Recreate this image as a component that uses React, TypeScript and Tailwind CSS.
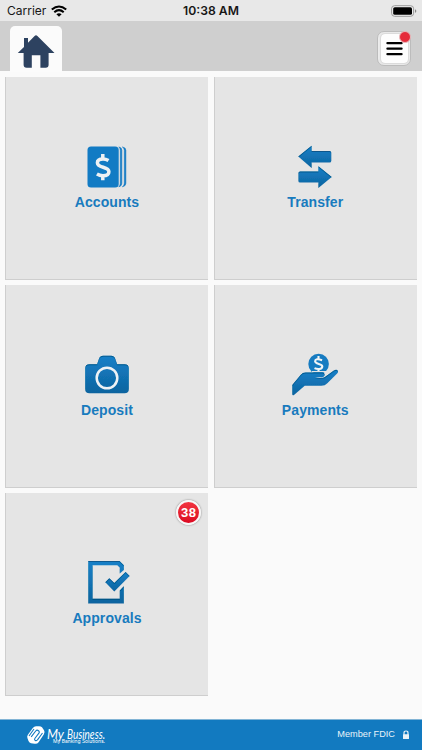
import React from "react";

function BlueDefs() {
  return (
    <svg width="0" height="0" className="absolute" aria-hidden="true">
      <defs>
        <linearGradient id="blue" x1="0" y1="0" x2="0" y2="1">
          <stop offset="0" stopColor="#1680c8" />
          <stop offset="1" stopColor="#0e649f" />
        </linearGradient>
        <filter id="inset" x="-10%" y="-10%" width="120%" height="120%">
          <feOffset in="SourceAlpha" dx="0.3" dy="0.8" result="off" />
          <feGaussianBlur in="off" stdDeviation="0.4" result="blur" />
          <feComposite in="SourceAlpha" in2="blur" operator="out" result="edge" />
          <feFlood floodColor="#0a3c63" floodOpacity="0.65" />
          <feComposite in2="edge" operator="in" result="shade" />
          <feMerge>
            <feMergeNode in="SourceGraphic" />
            <feMergeNode in="shade" />
          </feMerge>
        </filter>
      </defs>
    </svg>
  );
}

function AccountsIcon() {
  return (
    <svg width="60" height="50" viewBox="0.5 0 60 50">
      <rect x="11" y="4.500" width="31.200" height="41" rx="3.500" fill="#127bc4" />
      <path d="M42.300 4.900q3 .5 3 3.400v33q0 2.900-3 3.600q1.500-1.200 1.500-3.600V8.300q0-2.300-1.500-3.400z" fill="#127bc4" stroke="#127bc4" strokeWidth=".6" />
      <path d="M45.800 4.900q3.600.5 3.600 3.400v33q0 2.900-3.600 3.600q2-1.200 2-3.600V8.300q0-2.300-2-3.400z" fill="#127bc4" stroke="#127bc4" strokeWidth=".5" />
      <path d="M26.300 12v4.500M26.300 33.500v4.800M32 18.600q-2.800-1.700-5.500-1.700c-3.700 0-5.600 1.500-5.600 3.800 0 5.700 11.500 3.300 11.500 9 0 2.700-2.500 4-5.900 4q-3.400 0-6.100-1.600" fill="none" stroke="#edf1f4" strokeWidth="3.500" />
    </svg>
  );
}

function TransferIcon() {
  return (
    <svg width="60" height="50" viewBox="0 0 60 50">
      <g fill="url(#blue)" filter="url(#inset)">
        <path d="M13.300 14.400 26.600 3.700v5.300h18q1.600 0 1.600 1.500v8.500q0 1.500-1.600 1.500h-18v5.500z" />
        <path d="M46.700 34.900 33.400 24.200v5.300H15.100q-1.600 0-1.600 1.500v8.100q0 1.500 1.600 1.500h18.300v5.300z" />
      </g>
    </svg>
  );
}

function DepositIcon() {
  return (
    <svg width="60" height="50" viewBox="0 0 60 50">
      <path filter="url(#inset)" fill="url(#blue)" d="M12.500 14.200h7.600l2-5.600q1-2.800 4-2.800h8q3 0 4 2.800l2 5.600h7.400q4.300 0 4.300 4.300v20.500q0 4.300-4.300 4.300h-35q-4.300 0-4.300-4.300V18.500q0-4.300 4.300-4.300z" />
      <circle cx="30" cy="28" r="10.300" fill="none" stroke="#edf2f5" strokeWidth="2.500" />
    </svg>
  );
}

function PaymentsIcon() {
  return (
    <svg width="60" height="50" viewBox="0 0 60 50">
      <circle cx="33.600" cy="14" r="10.300" fill="#167bc1" />
      <path d="M33.500 6v3M33.500 18.500v2.700M37.100 10.200q-6.900-2.300-7 1.100c0 3.200 7.500 2 7.200 5.300-.3 2.800-4.800 2.900-7.800 1.500" fill="none" stroke="#f1f4f6" strokeWidth="2.100" />
      <path d="M27 21.600h14q3 .2 3.700 2" fill="none" stroke="#e5e5e5" strokeWidth="1.300" />
      <path filter="url(#inset)" fill="url(#blue)" d="M7.300 35 15.600 24.900q2-2.300 5-2.300h16.500q2.500 0 2.500 2 0 2.600-3 2.600H30q5 1.600 9.600 0l9.300-6.600q2.300-1.600 3.700-.2 1.200 1.400-.5 3.200L42.300 33.200q-2.300 2.500-5.900 2.500H19.700L9 44.900q-1.500 1-1.700-.7z" />
    </svg>
  );
}

function ApprovalsIcon() {
  return (
    <svg width="60" height="50" viewBox="0 0 60 50">
      <g fill="url(#blue)" filter="url(#inset)">
        <path d="M11.300 3h31.200l4.300 4.300V12l-4 3.600V9.700L40.300 7.300H15.600v33.400h27.200v-8.300l4-4.200v17.300H11.300z" />
        <path d="m28.300 24.300 4-4.100 5 4.900 11.300-11.200 4 4.100L37.300 33.500z" />
      </g>
    </svg>
  );
}

type TileProps = { label: string; icon: React.ReactNode; badge?: number };

function Tile({ label, icon, badge }: TileProps) {
  return (
    <div className="relative flex h-[203px] flex-col items-center border-b border-l border-[#cecece] bg-[#e5e5e5] pt-[65px] even:pr-[1.500px]">
      {icon}
      <span className="mt-[1px] text-[14px] leading-[18px] font-bold tracking-[0.080px] text-[#187bbe]">{label}</span>
      {badge !== undefined && (
        <span className="absolute top-[7px] right-[7px] flex h-[25px] w-[25px] items-center justify-center rounded-full border-2 border-[#f7f7f7] bg-linear-to-b from-[#f2323f] to-[#dc0722] pl-[0.500px] text-[13px] leading-none font-bold tracking-[0.500px] text-white shadow-[0_0_2px_#777]">
          {badge}
        </span>
      )}
    </div>
  );
}

function StatusBar() {
  return (
    <div className="grid h-[21px] grid-cols-3 items-center bg-[#e8e8e8] pt-[1px] font-[Inter,sans-serif] text-[12px] leading-[20px] text-[#171717]">
      <div className="flex items-center gap-[5px] pl-[7px]">
        <span className="w-[39px] text-[12px]">Carrier</span>
        <svg width="16" height="12" viewBox="0 0 16 12">
          <path d="M.8 4.500q7.200-6 14.400 0M3.300 7.200q4.700-4 9.400 0" fill="none" stroke="#000" strokeWidth="2.100" />
          <path d="M5.400 9.200q2.600-2 5.200 0L8 11.800z" fill="#000" />
        </svg>
      </div>
      <div className="text-center text-[12.200px] font-semibold whitespace-nowrap">10:38 AM</div>
      <div className="flex justify-end pr-[5px]">
        <svg width="26" height="12" viewBox="0 0 26 12">
          <rect x=".6" y=".7" width="22" height="10.600" rx="3" fill="#eee" stroke="#999" strokeWidth="1" />
          <rect x="2.200" y="2.200" width="18.800" height="7.600" rx="1.600" fill="#000" />
          <path d="M24 4.200q1.300.4 1.300 1.800T24 7.800z" fill="#888" />
        </svg>
      </div>
    </div>
  );
}

function Header() {
  return (
    <header className="flex h-[50px] justify-between bg-[#cfcfcf] pr-[11px] pl-[10px]">
      <div className="mt-[5px] flex h-[46px] w-[52px] justify-center rounded-t-[5px] bg-[#fbfbfb] pt-[8px] pr-[1px]">
        <svg width="38" height="34" viewBox="0 0 38 34">
          <path d="M7 4h4v4.800L17.600 2q1.400-1.300 2.800 0L37.500 19h-5.900v11.700q0 3-3 3h-5.200V21.300h-8.600v12.400h-5.200q-3 0-3-3V19H.8L7 13z" fill="#2d4260" />
        </svg>
      </div>
      <div className="relative mt-[10px] flex h-[35px] w-[34px] items-center justify-center rounded-[7px] border border-[#bcbcbc] bg-[#ececec]">
        <div className="flex h-[29px] w-[27px] items-center justify-center rounded-[4px] bg-[#fdfdfd] shadow-[0_0_2px_#aaa]">
          <svg width="17" height="15" viewBox="0 0 17 15">
            <path d="M1.500 2.100h14M1.500 7.600h14M1.500 13.100h14" stroke="#000" strokeWidth="2.400" strokeLinecap="round" />
          </svg>
        </div>
        <span className="absolute -top-[1px] -right-[1px] h-[12px] w-[12px] rounded-full border border-[#e9b8bb] bg-[#e52c3b]" />
      </div>
    </header>
  );
}

function Footer() {
  return (
    <footer className="flex h-[31px] items-center justify-between border-t border-[#82b4d5] bg-[#127ac0] pr-[12px] pl-[26px] text-white">
      <svg width="84" height="24" viewBox="0 0 84 24" className="overflow-visible">
        <g transform="translate(1 2.500)">
          <path d="M9 .8h3q2 0 3 1l2 3q1.300 2-.1 4l-5.300 7.900q-1.500 2-3.900 1.600L4 17.700Q2.400 17.300 1.500 15.500L.4 12.400q-.6-1.600.5-3.200L5.800 2.500Q7.200.8 9 .8z" fill="#fff" />
          <path d="M4.200 11.300 8.700 5.500q1.300-1.500 2.800-.3t.2 2.700L8 12.700q-1 1.500.3 2.200t2.200-.6l5-6.800M2 10.500l5-7" fill="none" stroke="#127ac0" strokeWidth="1.100" />
        </g>
        <g fill="#fff" fontStyle="italic" fontFamily="Lato, sans-serif" fontSize="13.500">
          <text x="21" y="15.500" textLength="17" lengthAdjust="spacingAndGlyphs">My</text>
          <text x="41" y="15.500" textLength="38" lengthAdjust="spacingAndGlyphs">Business.</text>
        </g>
        <text x="27" y="20.300" fontFamily="Inter, sans-serif" fontSize="5.300" fill="#fff" textLength="52" lengthAdjust="spacingAndGlyphs">My Banking Solutions.</text>
      </svg>
      <div className="flex items-center gap-[7px] text-[9.200px] text-[#e8f3fa]">
        <span>Member FDIC</span>
        <svg width="8" height="10" viewBox="0 0 8 10">
          <path d="M2 5V3q0-2 2-2t2 2v2" fill="none" stroke="#eaf2f7" strokeWidth="1.200" />
          <rect x="1" y="4.300" width="6" height="4.700" rx=".5" fill="#eaf2f7" />
        </svg>
      </div>
    </footer>
  );
}

export default function App() {
  return (
    <div className="flex h-[750px] w-[422px] flex-col overflow-hidden bg-[#fafafa] font-['Liberation_Sans',Arial,sans-serif]">
      <BlueDefs />
      <StatusBar />
      <Header />
      <main className="grid flex-1 grid-cols-2 content-start gap-x-[6px] gap-y-[5.300px] px-[5px] pt-[5.500px]">
        <Tile label="Accounts" icon={<AccountsIcon />} />
        <Tile label="Transfer" icon={<TransferIcon />} />
        <Tile label="Deposit" icon={<DepositIcon />} />
        <Tile label="Payments" icon={<PaymentsIcon />} />
        <Tile label="Approvals" icon={<ApprovalsIcon />} badge={38} />
      </main>
      <Footer />
    </div>
  );
}
